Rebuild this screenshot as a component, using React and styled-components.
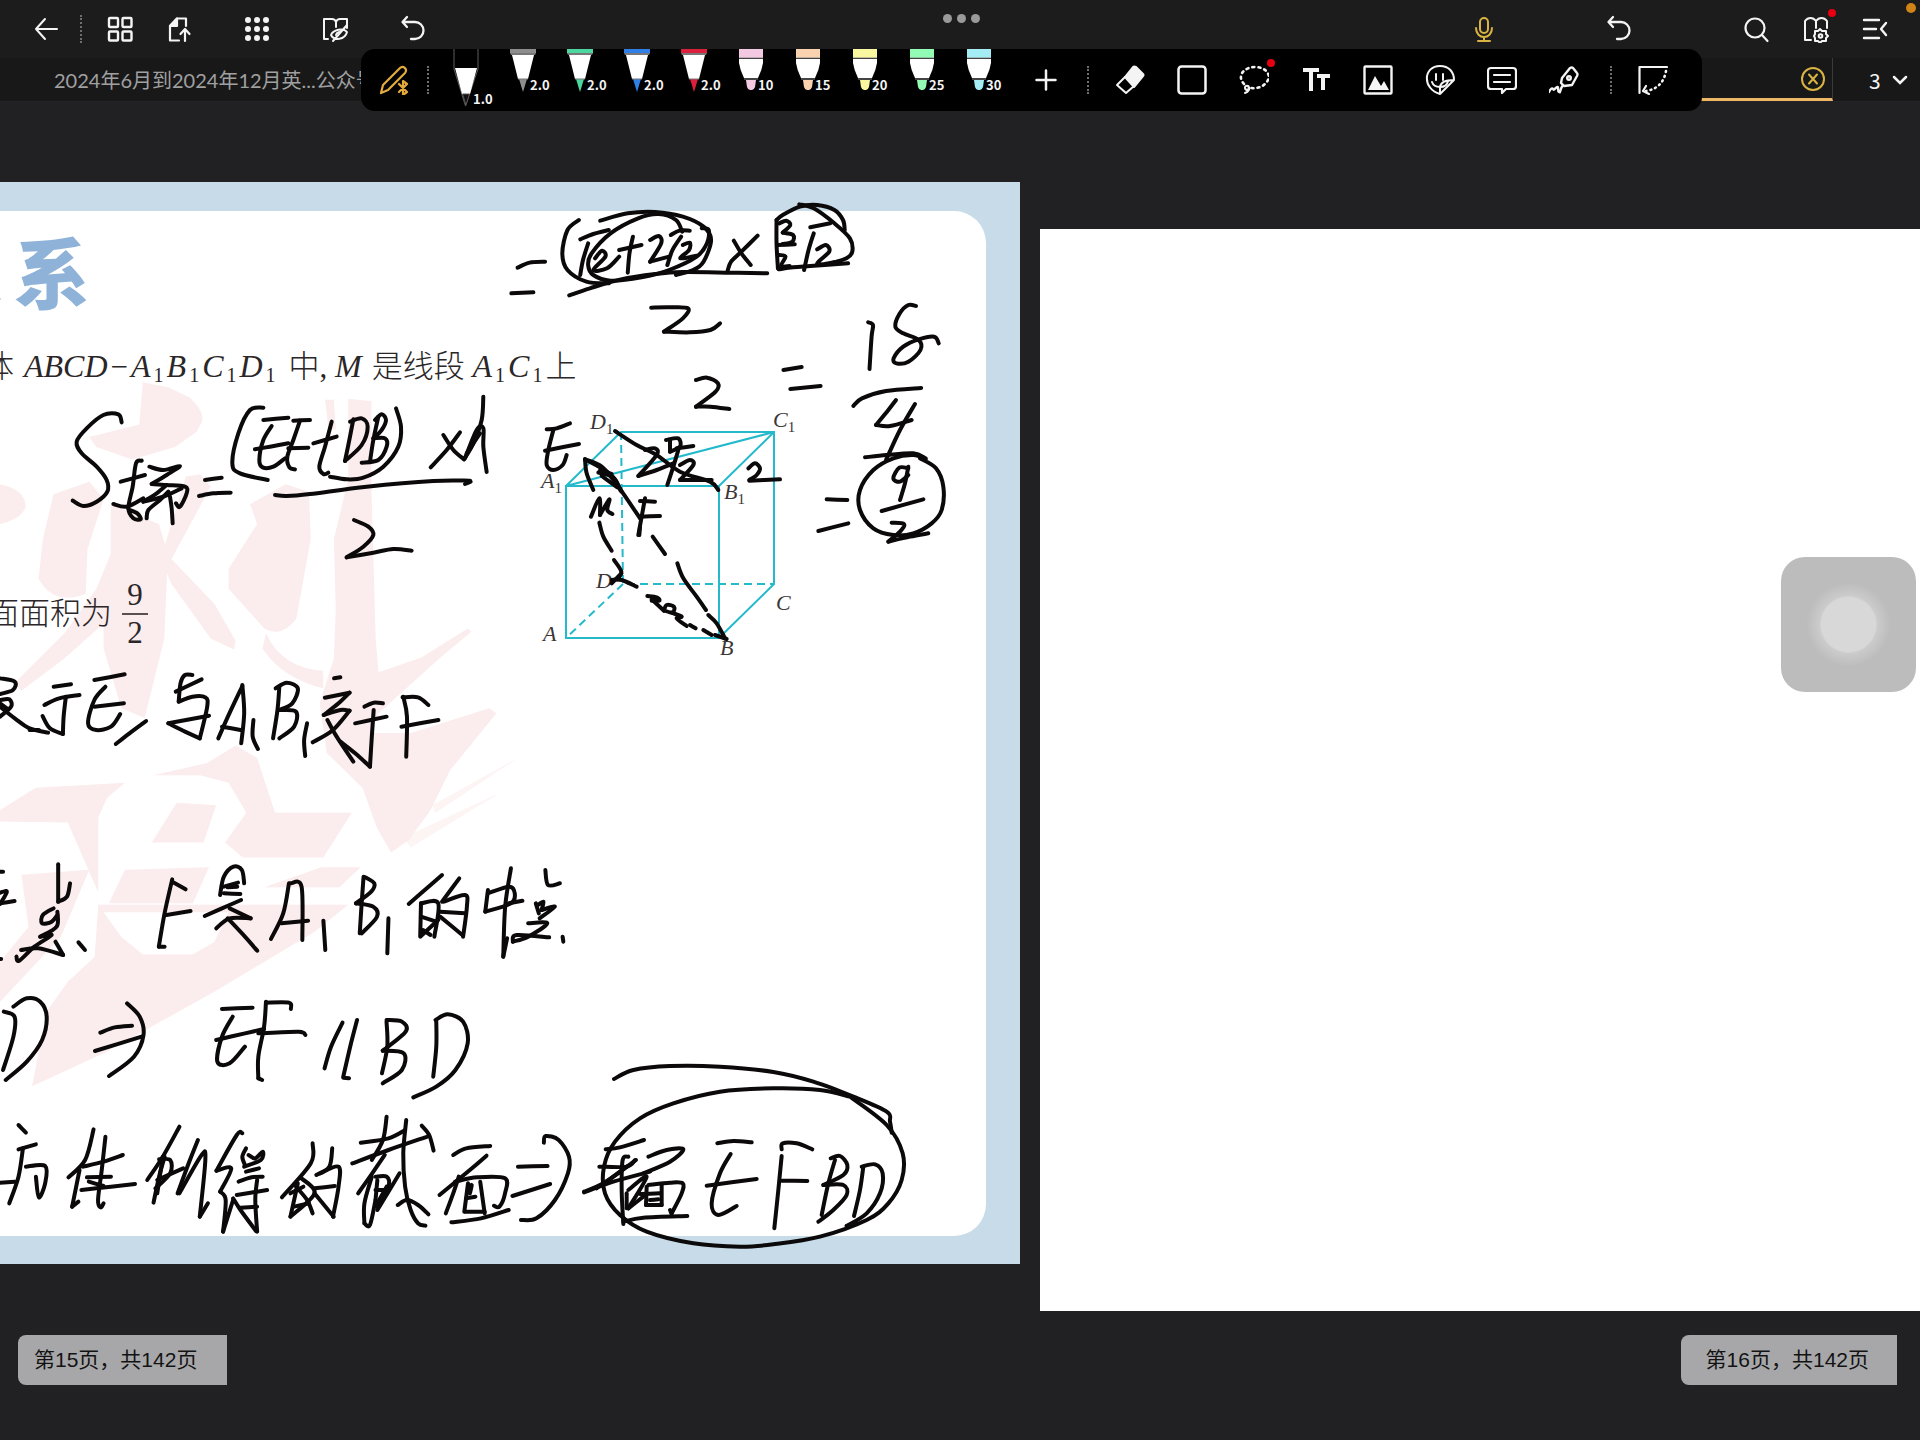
import styled, { createGlobalStyle } from 'styled-components'

const GlobalStyle = createGlobalStyle`
  * {
    box-sizing: border-box;
  }

  body {
    margin: 0;
    background: #212123;
    font-family: 'Liberation Sans', 'Noto Sans CJK SC', sans-serif;
  }
`

const Screen = styled.div`
  position: relative;
  min-height: 100vh;
  display: flex;
  flex-direction: column;
  overflow: hidden;
  background: #212123;
`

/// top bars

const NavBar = styled.header`
  display: grid;
  grid-template-columns: 1fr auto 1fr;
  align-items: center;
  height: 58px;
  padding: 0 30px 0 32px;
  background: #1c1c1c;
`

const NavGroup = styled.nav`
  display: flex;
  align-items: center;
  justify-content: ${props => props.$justify || 'flex-start'};
  gap: ${props => props.$gap || '50px'};
`

const IconButton = styled.button`
  position: relative;
  display: flex;
  align-items: center;
  justify-content: center;
  flex: none;
  width: ${props => props.$size || '28px'};
  height: ${props => props.$size || '28px'};
  padding: 0;
  border: 0;
  background: none;
  color: ${props => props.$color || '#f4f4f4'};
  cursor: pointer;
`

const Badge = styled.span`
  position: absolute;
  top: -6px;
  right: -6px;
  width: 8px;
  height: 8px;
  border-radius: 100%;
  background: #e60012;
`

const Divider = styled.span`
  flex: none;
  width: 0;
  height: ${props => props.$height || '28px'};
  margin-left: ${props => props.$before};
  margin-right: ${props => props.$after};
  border-left: 2px dotted #6e6e6e;
`

const MoreButton = styled.button`
  display: flex;
  gap: 5px;
  height: 20px;
  align-items: center;
  align-self: start;
  margin-top: 8px;
  padding: 0;
  border: 0;
  background: none;
`

const MoreDot = styled.span`
  width: 9px;
  height: 9px;
  border-radius: 100%;
  background: #9a9a9a;
`

const RecordingDot = styled.span`
  position: absolute;
  top: 3px;
  right: 4px;
  width: 10px;
  height: 10px;
  border-radius: 100%;
  background: #d08418;
`

const TabStrip = styled.div`
  display: flex;
  height: 44px;
  background: #181819;
  border-bottom: 1px solid #242426;
`

const Tab = styled.a`
  flex: 1;
  display: flex;
  align-items: center;
  padding-left: 54px;
  overflow: hidden;
  font-family: Lato, 'Noto Sans CJK SC', sans-serif;
  font-size: 20px;
  line-height: 24px;
  white-space: nowrap;
  text-decoration: none;
  color: #a0a0a0;
`

const ActiveTab = styled.div`
  flex: 1;
  display: flex;
  align-items: center;
  justify-content: flex-end;
  padding-right: 5px;
  border-bottom: 3px solid #eeb766;
  border-right: 1px solid #3a3a3a;
`

const TabCount = styled.button`
  display: flex;
  align-items: center;
  gap: 11px;
  width: 87px;
  padding: 0 0 0 36px;
  border: 0;
  background: none;
  color: #f4f4f4;
  font-family: 'Noto Sans CJK SC', sans-serif;
  font-size: 21px;
`

/// floating pen toolbar

const PenBar = styled.div`
  position: absolute;
  top: 49px;
  left: 361px;
  display: flex;
  align-items: center;
  height: 62px;
  padding: 0 34px 0 18px;
  border-radius: 14px;
  background: #000;
`

const PenRow = styled.div`
  display: flex;
  align-self: stretch;
  margin-right: 8px;
`

const PenSlot = styled.button`
  display: flex;
  align-items: flex-start;
  width: 57px;
  padding: 0;
  border: 0;
  background: none;
  color: #f4f4f4;
  cursor: pointer;
`

const PenSize = styled.span`
  margin-top: ${props => (props.$low ? '43px' : '29px')};
  margin-left: -6px;
  font-family: 'Noto Sans CJK SC', sans-serif;
  font-size: 13px;
  font-weight: 700;
  line-height: 14px;
`

const ToolRow = styled.div`
  display: flex;
  gap: 32px;
`

/// documents

const Workspace = styled.main`
  display: grid;
  grid-template-columns: 51fr 44fr;
  align-items: start;
  gap: 20px;
  padding-top: 80px;
`

const Paper = styled.article`
  position: relative;
  display: flex;
  min-height: 1082px;
  padding: 29px 34px 28px 0;
  background: #c8dbe8;
`

const BlankPaper = styled.article`
  min-height: 1082px;
  margin-top: 47px;
  background: #fff;
`

const Card = styled.div`
  flex: 1;
  padding-top: 20px;
  border-radius: 0 32px 32px 0;
  background: #fff;
  overflow: hidden;
`

const Layer = styled.svg`
  position: absolute;
  inset: 0;
  width: 100%;
  height: 100%;
  pointer-events: none;
`

const Printed = styled.section`
  position: relative;
`

const Title = styled.h1`
  display: flex;
  gap: 12px;
  margin: 0 0 37px -74px;
  color: #8fb2d8;
  font-family: 'Noto Sans CJK SC', sans-serif;
  font-size: 76px;
  font-weight: 900;
  line-height: 78px;
  white-space: nowrap;
`

const Line = styled.p`
  display: flex;
  align-items: center;
  gap: 10px;
  margin: 0 0 ${props => props.$after || '0'} ${props => props.$bleed};
  color: #2b2627;
  font-family: 'Liberation Serif', 'Noto Sans CJK SC', serif;
  font-size: 31px;
  font-weight: 300;
  line-height: 40px;
  white-space: nowrap;

  i {
    font-size: 32px;
  }

  sub {
    margin: 0 3px;
    font-size: 20px;
    line-height: 20px;
    vertical-align: -5px;
  }
`

const Dash = styled.span`
  margin: 0 3px;
`

const Fraction = styled.span`
  display: flex;
  flex-direction: column;
  align-items: center;
  width: 26px;
  line-height: 36px;

  span + span {
    align-self: stretch;
    text-align: center;
    border-top: 2px solid #5a5052;
  }
`

const PageLabels = styled.footer`
  display: flex;
  justify-content: space-between;
  margin-top: 24px;
  padding: 0 23px 55px 18px;
`

const PageLabel = styled.span`
  padding: 0 ${props => props.$end} 0 ${props => props.$start};
  border-radius: 8px 0 0 8px;
  background: #a7a7a9;
  color: #131313;
  font-size: 21px;
  line-height: 50px;
`

const TouchButton = styled.button`
  position: absolute;
  top: 557px;
  right: 4px;
  width: 135px;
  height: 135px;
  border: 0;
  border-radius: 24px;
  background: radial-gradient(circle, #d8d8d8 27px, #cbcbcb 29px, #bcbcbc 42px);
`

/// icons

const Icon = ({ children, size = 28, width = 2 }) => (
  <svg
    width={size}
    height={size}
    viewBox={`0 0 ${size} ${size}`}
    fill='none'
    stroke='currentColor'
    strokeWidth={width}
    strokeLinecap='round'
    strokeLinejoin='round'
    aria-hidden='true'
  >
    {children}
  </svg>
)

const BackIcon = () => <Icon><path d='M25 14H4M13 4L4 14l9 10' /></Icon>

const GridIcon = () => (
  <Icon width={2.4}>
    <rect x='3' y='3' width='9' height='9' rx='1' />
    <rect x='16.500' y='3' width='9' height='9' rx='1' />
    <rect x='3' y='16.500' width='9' height='9' rx='1' />
    <rect x='16.500' y='16.500' width='9' height='9' rx='1' />
  </Icon>
)

const ExportIcon = () => (
  <Icon width={2.2}>
    <path d='M13 25.500H4V11l7-7.500h9V11' />
    <path d='M4 11l7-7.500V11z' fill='currentColor' />
    <path d='M19 26V15M14.500 19l4.500-5 4.500 5' />
  </Icon>
)

const DotsIcon = () => (
  <Icon>
    {[5, 14, 23].map(y => [4, 13, 22].map(x => (
      <circle key={`${x}-${y}`} cx={x} cy={y} r='3' fill='currentColor' stroke='none' />
    )))}
  </Icon>
)

const BookSlashIcon = () => (
  <Icon>
    <path d='M6 24H2V4h8q3 0 4 3 1-3 4-3h7v9M14 7v5' />
    <path d='M9 20c2-5 12-8 16-3-2 8-13 9-16 3zM11 26L25 10' />
    <path d='M14 20q1-3 4-3' />
  </Icon>
)

const UndoIcon = () => <Icon width={2.3}><path d='M7 2L2.500 7 7 12M3 7h12a8.500 8.500 0 010 17h-4' /></Icon>

const MicIcon = () => (
  <Icon>
    <rect x='10' y='3' width='8' height='15' rx='4' />
    <path d='M6 13c0 12 16 12 16 0M14 22v4M8 26h12' />
  </Icon>
)

const SearchIcon = () => (
  <Icon width={2.2}>
    <circle cx='13' cy='13' r='9.500' />
    <path d='M20 20l5.500 6' />
  </Icon>
)

const BookGearIcon = () => (
  <Icon>
    <path d='M9 25H3V6c3-4 8-4 11 0v7M14 6c3-4 8-4 11 0v7' />
    <path d='M18 14l2 2h4l0 3 2 2-2 2v3h-4l-2 2-2-2h-3v-3l-1-2 1-2v-3h3z' />
    <circle cx='18.500' cy='21' r='1.800' />
  </Icon>
)

const MenuIcon = () => <Icon width={2.4}><path d='M2 5h15M2 14h12M2 23h15M24 8l-5 6 5 6' /></Icon>

const CloseIcon = () => (
  <Icon>
    <circle cx='14' cy='15' r='11' />
    <path d='M10 10.500l8 9M18 10.500l-8 9' />
  </Icon>
)

const PenBluetoothIcon = () => (
  <Icon size={30} width={2.2}>
    <path d='M2 28l2-8L21 3c3-3 8 1 5 5L9 25z' />
    <path d='M20 19l8 8-4 3V16l4 3-8 8' />
  </Icon>
)

const PlusIcon = () => <Icon width={2.5}><path d='M14 4.500v19M4.500 14h19' /></Icon>

const EraserIcon = () => (
  <Icon size={30}>
    <path d='M10 12L18 2q1-1 3 0l7 7q1 1 0 2l-9 11z' fill='currentColor' />
    <path d='M10 12l-8 8 9 8 8-7' />
  </Icon>
)

const ShapeIcon = () => <Icon size={30} width={2.5}><rect x='1.500' y='1.500' width='27' height='27' rx='3' /></Icon>

const LassoIcon = () => (
  <Icon size={30} width={2.6}>
    <path d='M5 19C-3 10 6 2 16 2s16 7 13 13-10 9-17 8' strokeDasharray='2 4' />
    <path d='M9 21c-4-1-4 4 0 4 1-2 1-4 0-4 3 3 0 6-3 7' strokeWidth='2' />
  </Icon>
)

const TextIcon = () => (
  <Icon size={30}>
    <path d='M2 5h16M10 4v22M16 11h13M22 11v14' strokeWidth='4' strokeLinecap='butt' />
  </Icon>
)

const ImageIcon = () => (
  <Icon size={30} width={2.4}>
    <rect x='1.500' y='1.500' width='27' height='27' rx='1' />
    <path d='M5 25l7-14 6 10 3-5 5 9z' fill='currentColor' stroke='none' />
  </Icon>
)

// round face with its lower right corner peeled off
const StickerIcon = () => (
  <Icon size={30}>
    <path d='M15 29C-3 24-2 1 15 1c9 0 14 6 14 14L15 29zM15 29V22q1-7 14-7' />
    <path d='M11 9v6M18 9v6M15 22C10 22 8 20 7 17M23 16q-1 6-8 6' />
  </Icon>
)

const CommentIcon = () => (
  <Icon size={30} width={2.2}>
    <path d='M4 3h22q3 0 3 3v15q0 3-3 3h-7l-4 4v-4H4q-3 0-3-3V6q0-3 3-3zM7 10h16M7 17h16' />
  </Icon>
)

const SignIcon = () => (
  <Icon size={30} width={2.4}>
    <path d='M13 13L21 3q2-1 3 0l4 5q1 1 0 3l-5 9-8 1-3-3z' />
    <circle cx='20' cy='13' r='1.800' />
    <path d='M14 20c-4 6-2 8-4 7s0-6-2-5-3 4-4 2-3 1-4 3' />
  </Icon>
)

const RulerIcon = () => (
  <Icon size={30} width={2.2}>
    <path d='M1.500 28V2H29' />
    <path d='M28 6c-2 11-8 18-20 20' strokeDasharray='1 4' strokeWidth='2.600' />
    <path d='M8 21l-3 5 6 3' />
  </Icon>
)

const ChevronIcon = () => (
  <svg width='16' height='10' fill='none' stroke='currentColor' strokeWidth='2.500' strokeLinecap='round' aria-hidden='true'>
    <path d='M2 2l6 6 6-6' />
  </svg>
)

const pens = [
  { kind: 'active', color: '#000', size: '1.0' },
  { kind: 'pen', color: '#8d8d8d', size: '2.0' },
  { kind: 'pen', color: '#4cd6a0', size: '2.0' },
  { kind: 'pen', color: '#2f7fe6', size: '2.0' },
  { kind: 'pen', color: '#dc1f3c', size: '2.0' },
  { kind: 'marker', color: '#f3c9e2', size: '10' },
  { kind: 'marker', color: '#fad2b0', size: '15' },
  { kind: 'marker', color: '#f9f7a0', size: '20' },
  { kind: 'marker', color: '#92fbb4', size: '25' },
  { kind: 'marker', color: '#a4edf5', size: '30' },
]

const PenDrawing = ({ kind, color }) => (
  <svg width='26' height='60' viewBox='0 0 26 60' aria-hidden='true'>
    {kind === 'active' && (
      <>
        <path d='M1 0v20l11.500 37L25 20V0' fill='#000' stroke='#5c5c5c' />
        <path d='M2 19h22l-7 26H9z' fill='#fff' />
        <path d='M9.500 45h7L13 56z' fill='#111' stroke='#555' />
      </>
    )}
    {kind === 'pen' && (
      <>
        <path d='M0 0h26v4H0z' fill={color} />
        <path d='M0 4h26l-1 2H1z' fill='#777' />
        <path d='M2 6h22l-6 24H8z' fill='#fff' />
        <path d='M9 30h8l-4 13z' fill={color} />
        <path d='M8 30h10' stroke='#777' />
      </>
    )}
    {kind === 'marker' && (
      <>
        <path d='M1 0h24v9H1z' fill={color} />
        <path d='M1 10h24v4q-1 7-5 15H6Q2 21 1 14z' fill='#fff' />
        <path d='M1 9h24M6 30h14' stroke='#888' />
        <path d='M8 31h10l-1 7q-1 3-3 3h-2q-2 0-3-3z' fill={color} />
      </>
    )}
  </svg>
)

const tools = [
  { label: '橡皮', icon: EraserIcon },
  { label: '形状', icon: ShapeIcon },
  { label: '套索', icon: LassoIcon, badge: true },
  { label: '文字', icon: TextIcon },
  { label: '图片', icon: ImageIcon },
  { label: '贴纸', icon: StickerIcon },
  { label: '批注', icon: CommentIcon },
  { label: '签名', icon: SignIcon },
]

/// ink

// Every sheet keeps its own origin and scale, strokes are separated by ";"
const inkSheets = [
  {
    place: 'translate(0 180) scale(0.33333)',
    strokes: `365,727 355,703 310,705 260,745 230,785 245,820 290,860 320,900 322,935 290,965 250,978 218,962;
      362,905 435,885;425,842 408,850 398,920 385,985 400,1015 422,1018 412,1000 385,988;340,972 380,980 430,955;
      448,860 490,870 540,858 500,885 455,912;455,912 500,915 555,920 560,940 540,980 528,970;500,915 470,940 430,965;
      430,965 490,950 545,925;510,950 515,985 518,1030;440,1015 445,990 480,960 505,935;
      615,900 665,893;597,948 640,940 692,938;
      790,683 750,690 715,760 697,850 720,880 803,900;
      790,720 865,713;815,738 790,780 778,840 788,862 820,860 855,835;765,808 810,800 865,790;
      880,722 930,720;900,722 880,780 862,830 868,862 885,868;865,805 925,803;
      995,725 975,800 958,860 970,882 985,878;940,790 1010,770;
      1060,718 1050,770 1035,843;1050,725 1085,715 1103,740 1085,795 1035,843;
      1135,710 1120,780 1110,845;1125,720 1145,703 1158,720 1145,750 1120,775;1120,775 1155,775 1160,800 1135,840 1085,848;
      1188,685 1203,740 1195,800 1150,860 1090,893 1040,898 990,890;
      1330,765 1360,810 1392,838;1380,757 1340,810 1292,862;
      1450,650 1445,720 1420,790 1392,838;1395,835 1430,750 1450,745 1450,800 1460,876;1400,820 1440,760;
      825,945 860,948 930,942 1100,920 1300,903 1410,902;1395,912 1412,905;
      1062,1020 1105,1040 1120,1065 1090,1100 1040,1132;1040,1132 1120,1118 1180,1107 1235,1112`,
  },
  {
    place: 'translate(490 190) scale(0.34439 0.33333)',
    strokes: `80,233 115,218 160,215;62,310 126,307;
      258,90 225,120 210,190 225,240 280,275 345,280;
      262,148 300,132 345,120;285,160 270,210 262,255;305,205 325,182 335,200 300,240 340,235 375,200;
      320,92 400,70 480,66 560,80 620,110 642,150 620,215 590,240 540,255;
      558,125 540,90 490,72 430,85 350,130 295,190 285,225 300,255 350,272 440,262 520,240 600,200 630,160 635,120 615,115;
      415,140 405,190 400,248;375,180 440,165;
      465,150 490,138 497,160 465,215;465,215 520,200;
      555,140 530,180 515,225;525,135 550,122 580,122;560,165 580,158 578,180 553,205 600,197;
      230,316 290,295 380,268 480,252 560,246 700,248 805,250;
      708,152 730,190 757,225;777,137 730,185 700,215 690,242;
      840,100 860,92 872,105 850,128;850,128 880,135 878,155 850,162;835,165 885,163;840,195 858,200 845,228 870,228;
      832,90 832,160 836,235;832,90 850,75 900,50 950,45 1000,60 1025,90 1030,120;
      898,43 940,55 1000,100 1045,145 1052,185 1035,205 990,220;838,238 880,232 930,228 1040,220;
      940,130 925,180 912,240;930,112 988,100;950,178 975,165 985,185 950,222 1010,215;
      468,353 520,352 575,355 560,385 505,425;505,425 580,427 640,420 668,400;
      598,570 630,563 662,580 655,605 598,650;598,650 640,650 695,657;
      852,540 905,531;872,597 960,588;
      1098,397 1112,405 1108,440 1102,537;
      1237,348 1215,345 1190,370 1177,410 1200,430 1245,450 1250,480 1215,515 1180,520 1172,505 1200,470 1245,448 1290,440 1303,460;
      1055,648 1080,625 1150,603 1252,594`,
  },
  {
    place: 'translate(530 400) scale(0.33333)',
    strokes: `50,88 80,85 120,70;70,90 55,150 50,195 70,210 98,195 110,165;45,152 147,132;
      255,93 320,135 380,165 450,215 540,245 565,270;
      345,150 375,145 380,165 325,228;325,228 380,210 430,190;
      408,120 445,115 450,140 420,155;420,120 420,155;440,145 490,138;445,150 430,200 412,255;
      450,195 480,180 490,195 450,240;450,240 545,240;
      165,178 215,200 265,260 330,355;165,178 240,222 275,275;205,218 250,232 272,272;215,228 262,262;210,212 245,222;
      165,178 170,220 190,270;
      183,350 208,295 210,345;210,345 238,298 232,330 247,342;
      345,295 335,350 325,405;330,303 375,305;330,350 390,348;330,380 328,405;
      208,368 220,410 245,452;252,480 274,515 262,538;274,520 245,550;245,540 275,540 320,560;
      368,410 405,462;442,490 460,535 500,590 528,630;535,645 560,670 585,715;
      352,588 380,592 388,602 365,602;365,598 402,632;402,632 410,615 432,620 428,638 405,632;425,638 455,650 440,655 470,678;480,675 497,685;520,690 545,705;555,705 590,717;
      655,205 675,190 690,205 680,225 658,240;658,242 750,238;
      1098,0 1075,30 1038,75;1038,75 1080,78 1145,60;1155,12 1110,90 1068,180;
      1005,172 1070,165 1150,160 1187,175;
      890,298 952,300;865,393 955,370;
      1170,175 1218,205 1240,260 1235,330 1205,370 1150,400 1090,405 1030,385 990,330 990,270 1030,210 1090,175 1150,165 1187,178;
      1135,205 1108,203 1090,235 1110,245 1135,225;1135,200 1125,250 1110,300;1055,333 1180,298;
      1085,368 1122,372 1110,395 1075,425;1075,425 1140,410 1195,400`,
  },
  {
    place: 'translate(0 560) scale(0.36997 0.33333)',
    strokes: `0,355 40,365 35,390 0,402;0,420 25,418 30,440 0,470;0,430 22,448;0,440 40,475 80,505 130,518;80,510 105,510;
      145,380 192,373;120,435 160,415 215,405;178,410 172,470 170,522;170,522 135,505 115,468;
      255,360 337,343;285,380 255,420 238,490 260,510 300,500 325,462;255,440 335,430;
      395,483 350,520 313,552;
      520,345 500,345 488,370 483,425;475,395 545,358;483,425 520,410 555,412 560,440 540,535;565,467 455,490;455,490 500,515 540,535;
      655,378 620,460 590,535;655,375 660,460 652,550;600,500 650,510;
      685,480 683,530 697,567;
      755,380 750,450 738,535;745,385 775,368 805,385 790,430 755,450;755,450 800,455 795,500 755,535;
      830,490 822,540 825,588;
      903,355 920,352;878,413 945,398;945,398 915,430 875,465;875,465 920,450 945,452;945,452 900,510 845,547;885,480 910,530 955,605;
      985,440 1010,428 1035,430;960,490 1045,470;1010,450 1005,530 1000,620;1000,620 960,580 920,545;
      1090,410 1100,470 1098,590;1088,412 1130,412 1158,435;1085,500 1185,480`,
  },
  {
    place: 'translate(0 840) scale(0.38271 0.33333)',
    strokes: `0,95 8,95;0,158 18,155 0,192;0,190 38,183;0,357 3,357;
      152,73 152,130 152,185;152,185 175,170 183,130;
      140,205 112,225 110,250 135,245 150,225;150,215 148,260 105,290;105,290 135,285 90,320 50,362 43,350;55,330 100,325 165,345;145,305 165,345;205,307 222,330;
      450,118 430,220 415,320;415,320 430,320;450,125 485,148;435,225 498,213;
      575,165 585,110 610,80 632,90 638,130;585,140 622,128;595,142 620,140;585,160 628,162;
      535,228 580,205 630,180;600,205 655,235;655,235 600,235 565,265;595,235 640,290 672,332;
      755,130 740,220 708,297;760,130 788,140 790,300;735,250 805,242;
      845,242 850,330;
      950,110 945,190 940,280;955,112 978,130 970,155 930,190;930,190 975,200 985,230 945,280;
      1015,235 1012,340;
      1155,105 1100,160 1068,192;1100,190 1098,290;1100,190 1145,190 1135,290;1100,230 1140,245;1100,288 1145,240;1105,270 1125,285;
      1200,115 1155,185;1160,185 1215,165 1220,200 1210,290;1150,215 1215,220;1150,230 1208,285;
      1335,85 1320,200 1315,350;1315,350 1325,295;1275,150 1268,215;1275,160 1330,140 1345,160 1335,190 1268,215;1330,190 1365,182;
      1425,90 1432,135 1463,130;1400,190 1408,220;1405,195 1420,185 1415,210;1415,210 1450,200 1410,235;
      1380,250 1430,250 1380,290 1340,305;1340,305 1350,285 1435,292;1470,290 1472,305;
      10,515 38,530 35,590 8,690;35,500 70,475 105,485 122,530 110,600 70,665 15,720;
      262,578 300,562 345,557;248,633 370,590;332,490 365,530 375,585 350,650 285,708;
      580,507 660,503;608,530 580,590 568,665 600,670 640,620;565,600 640,580 690,567;
      695,485 690,560 675,650 675,715;675,715 685,720;695,488 755,488 760,507;675,580 780,575 798,585;
      895,548 865,620 848,685;933,540 915,620 897,710;897,713 912,715;
      1010,545 1012,620 998,700;1010,540 1050,545 1060,575 1000,632;1000,632 1055,640 1050,690 1000,730;
      1140,545 1140,620 1132,710;1138,540 1170,523 1210,545 1222,610 1190,690 1140,740 1080,772`,
  },
  {
    place: 'translate(0 1060) scale(0.36997 0.33333)',
    strokes: `50,195 70,218;50,268 97,253;62,265 50,350 25,430;70,320 122,318 122,370 105,412 97,350;0,368 40,365;
      253,208 230,300 185,352;215,330 195,440;195,440 212,425;225,320 280,305 332,285;285,230 275,330 265,420 272,442 280,430;235,352 300,350;220,390 300,380 365,372;240,365 280,378;
      485,200 440,290 398,360;445,290 430,350 415,428;430,298 460,300 460,340 420,385;425,360 495,325;440,290 425,400;
      535,240 510,310 480,400;485,400 545,285 555,300 540,470;540,470 562,430;
      655,220 640,225 585,332;585,332 625,325 595,395;595,395 610,420 603,515;603,515 630,420;
      665,265 655,290 662,315;672,285 690,295 710,275 705,300 660,320;700,325 665,335;645,365 680,352 710,350;640,405 722,390;695,360 690,420 695,515;630,415 650,450 692,513;650,443 695,440;
      845,250 840,310 762,412;805,370 785,470;785,470 850,400 815,355;800,380 830,420 845,460;795,440 835,430;785,400 820,380;
      898,265 890,320 855,345;865,340 915,320 915,380 900,470;850,385 905,378;850,400 902,470;
      1045,170 1035,240 1005,300;975,248 1050,235 1095,210;952,310 1050,270 1155,230;1098,180 1090,280 1095,380 1110,450 1130,490 1150,497;1140,197 1160,225 1172,272;
      1040,285 1000,350 968,400;1005,350 985,430 985,490;985,490 1000,495 1015,420;1015,350 1045,350 1050,380 1020,440;1020,360 1015,420;1015,390 1045,390;1020,450 1080,340;1020,430 1045,380;
      1075,435 1100,420 1130,435 1158,463;
      1225,285 1260,265 1325,258;1315,287 1270,330 1188,405;1240,350 1225,400 1205,460;1230,365 1290,352 1365,355 1365,400 1350,440 1335,437;
      1265,370 1255,455;1265,385 1275,375 1270,400;1298,365 1310,460;1260,415 1285,410;1258,455 1310,455;1220,487 1300,475 1375,450;
      1400,320 1480,318;1385,408 1487,372;1470,248 1475,228 1510,240 1538,290 1535,340 1500,420 1450,475 1408,480`,
  },
  {
    place: 'translate(560 1050) scale(0.33333)',
    strokes: `162,87 220,60 330,48 480,50 640,66 760,95 880,140 980,185 990,215 995,248;
      870,140 980,225 1028,310 1025,390 985,460 920,510 780,560 640,583 540,590 400,580 260,545 180,495 135,430 132,350 165,275 240,205 340,160 480,125 640,115 780,120 870,140;
      137,298 180,292 252,270;118,350 200,350 225,330;72,427 160,395 270,365;72,425 130,400 200,350;205,320 188,330 185,420 190,522;
      265,320 320,300 370,298 330,335 250,370;228,330 160,380 110,415;205,420 260,380 205,475;200,430 200,475;205,475 250,440;
      260,410 258,465;258,465 305,465;305,465 305,405;240,432 300,430;270,450 295,448;
      265,405 330,398 368,400 365,430 335,490;330,480 335,492;190,515 250,503 382,498;
      472,280 520,273 575,277;512,312 480,370 455,460 475,495 530,468;440,407 590,387;
      665,318 655,420 643,535;665,298 668,280 710,280 757,298;665,392 742,393;
      825,330 805,400 785,495;812,325 840,318 862,345 850,375 790,405;790,405 850,405 860,435 820,480 775,515;
      910,350 900,420 882,498;905,350 945,343 968,370 960,430 920,490 860,528;860,528 890,520`,
  },
]

const smooth = stroke => {
  const p = stroke.trim().split(/\s+/).map(pair => pair.split(',').map(Number))
  let d = `M${p[0]}`
  for (let i = 0; i < p.length - 1; i++) {
    const a = p[i - 1] || p[i]
    const b = p[i]
    const c = p[i + 1]
    const e = p[i + 2] || c
    d += `C${b[0] + (c[0] - a[0]) / 6} ${b[1] + (c[1] - a[1]) / 6} ${c[0] - (e[0] - b[0]) / 6} ${c[1] - (e[1] - b[1]) / 6} ${c[0]} ${c[1]}`
  }
  return d
}

const Ink = () => (
  <Layer viewBox='0 182 1020 1082' fill='none' stroke='#0b0909' strokeWidth='4' strokeLinecap='round' strokeLinejoin='round' aria-hidden='true'>
    {inkSheets.map(sheet => (
      <g key={sheet.place} transform={sheet.place}>
        {sheet.strokes.split(';').map((stroke, i) => (
          <path key={i} d={smooth(stroke)} vectorEffect='non-scaling-stroke' />
        ))}
      </g>
    ))}
  </Layer>
)

const Watermark = () => (
  <Layer viewBox='0 182 1020 1082' aria-hidden='true'>
    <g transform='translate(0 340) scale(0.35714 0.4975)' fill='#fbeced'>
      <path d='M390 170L400 85 470 95 530 115Q575 145 565 165L550 185 490 215 370 240 270 215 250 195z' />
      <path d='M910 120h25l5 60h-20zM975 118l65 5v180l12 300 8 65 120-30 130-58 10 6-90 54-170 110-20 40h110l220-50 20 10-130 115-55 80-60 60-50 25-40-50-40-80-100-70-20-100 40-90 5-100-5-140 40-120z' />
      <path d='M0 290Q70 300 72 335Q60 360 0 370z' />
      <path d='M150 310L250 285 290 320 245 420 240 510Q150 535 108 480L120 400z' />
      <path d='M310 330L445 370 470 430 460 600 405 760 340 740 290 620V570L180 640 60 705 40 690 180 590 270 500 310 430z' />
      <path d='M520 275L560 270 590 295 480 440 600 530 660 605 655 622 590 600 480 490 450 440z' />
      <path d='M700 330L800 290 865 305 870 400 830 560Q790 600 740 580L640 500V460L720 370z' />
      <path d='M745 590Q790 660 905 665V700Q790 680 735 620z' />
      <path d='M430 875L580 850 660 815 720 840 770 950H985L905 1040H680L630 1010 690 950 640 890 560 875z' />
      <path d='M495 930L605 935 570 1010H425z' />
      <path d='M0 945L100 900 350 890 300 920 275 960V1110L190 970 0 968z' />
      <path d='M350 1065L585 1060 540 1132H305z' />
      <path d='M60 1075L250 1065 170 1200 0 1330V1250L80 1180z' />
      <path d='M275 1135L975 1135 880 1190 600 1310 450 1370 300 1430 90 1500 130 1350 190 1290 265 1240z' />
      <path d='M290 1150H640L600 1210 540 1235H400L340 1200z' fill='#fff' />
      <path d='M740 1100L900 1060 1010 1060 950 1100z' />
      <path d='M1210 935L1450 840 1220 950zM1130 1000L1400 910 1150 1020z' opacity='0.6' />
    </g>
  </Layer>
)

const cubeLabels = [
  { x: 590, y: 429, name: 'D', index: '1' },
  { x: 773, y: 427, name: 'C', index: '1' },
  { x: 541, y: 488, name: 'A', index: '1' },
  { x: 724, y: 499, name: 'B', index: '1' },
  { x: 596, y: 588, name: 'D' },
  { x: 776, y: 610, name: 'C' },
  { x: 543, y: 641, name: 'A' },
  { x: 720, y: 655, name: 'B' },
]

const CubeLabel = styled.text`
  fill: #3b3637;
  font-family: 'Liberation Serif', serif;
  font-size: 22px;
  font-style: italic;
`

const Cube = () => (
  <Layer viewBox='0 182 1020 1082'>
    <g fill='none' stroke='#25b9cc' strokeWidth='2'>
      <path d='M566 486H719V638H566zM566 486L621 432H774V584L719 638M719 486L774 432M566 486L774 432' />
      <path d='M621 432L623 584H774M623 584L566 638' strokeDasharray='8 5' />
    </g>
    {cubeLabels.map(({ x, y, name, index }) => (
      <CubeLabel key={`${name}${index}`} x={x} y={y}>
        {name}
        {index && <tspan dy='5' fontSize='15' fontStyle='normal'>{index}</tspan>}
      </CubeLabel>
    ))}
  </Layer>
)

export default function App() {
  return (
    <Screen>
      <GlobalStyle />
      <NavBar>
        <NavGroup>
          <NavGroup $gap='0'>
            <IconButton aria-label='返回'><BackIcon /></IconButton>
            <Divider $before='20px' $after='24px' />
            <NavGroup $gap='32px'>
              <IconButton aria-label='缩略图'><GridIcon /></IconButton>
              <IconButton aria-label='导出'><ExportIcon /></IconButton>
            </NavGroup>
          </NavGroup>
          <IconButton aria-label='应用'><DotsIcon /></IconButton>
          <IconButton aria-label='阅读模式'><BookSlashIcon /></IconButton>
          <IconButton aria-label='撤销'><UndoIcon /></IconButton>
        </NavGroup>
        <MoreButton aria-label='更多'>
          <MoreDot />
          <MoreDot />
          <MoreDot />
        </MoreButton>
        <NavGroup $justify='flex-end' $gap='108px'>
          <IconButton aria-label='录音' $color='#d9b443'><MicIcon /></IconButton>
          <IconButton aria-label='恢复'><UndoIcon /></IconButton>
          <NavGroup $gap='32px'>
            <IconButton aria-label='搜索'><SearchIcon /></IconButton>
            <IconButton aria-label='文档设置'>
              <BookGearIcon />
              <Badge />
            </IconButton>
            <IconButton aria-label='菜单'><MenuIcon /></IconButton>
          </NavGroup>
        </NavGroup>
      </NavBar>
      <RecordingDot />

      <TabStrip>
        <Tab href='#'>2024年6月到2024年12月英...公众号</Tab>
        <ActiveTab>
          <IconButton aria-label='关闭' $color='#d9b443'><CloseIcon /></IconButton>
        </ActiveTab>
        <TabCount>
          3
          <ChevronIcon />
        </TabCount>
      </TabStrip>

      <PenBar>
        <IconButton $size='30px' $color='#e3ab3c' aria-label='蓝牙笔'><PenBluetoothIcon /></IconButton>
        <Divider $before='18px' $after='24px' />
        <PenRow>
          {pens.map((pen, i) => (
            <PenSlot key={i}>
              <PenDrawing kind={pen.kind} color={pen.color} />
              <PenSize $low={pen.kind === 'active'}>{pen.size}</PenSize>
            </PenSlot>
          ))}
        </PenRow>
        <IconButton $size='30px' aria-label='添加'><PlusIcon /></IconButton>
        <Divider $before='26px' $after='26px' />
        <ToolRow>
          {tools.map(({ label, icon: ToolIcon, badge }) => (
            <IconButton key={label} $size='30px' aria-label={label}>
              <ToolIcon />
              {badge && <Badge />}
            </IconButton>
          ))}
        </ToolRow>
        <Divider $before='31px' $after='26px' />
        <IconButton $size='30px' aria-label='收起'><RulerIcon /></IconButton>
      </PenBar>

      <Workspace>
        <Paper>
          <Card>
            <Watermark />
            <Printed>
              <Title>
                <span>关</span>
                <span>系</span>
              </Title>
              <Line $bleed='-17px' $after='190px'>
                <span>体</span>
                <span><i>ABCD</i><Dash>−</Dash><i>A</i><sub>1</sub><i>B</i><sub>1</sub><i>C</i><sub>1</sub><i>D</i><sub>1</sub></span>
                <span>中, <i>M</i></span>
                <span>是线段 <i>A</i><sub>1</sub><i>C</i><sub>1</sub>上</span>
              </Line>
              <Line $bleed='-12px'>
                <span>面面积为</span>
                <Fraction>
                  <span>9</span>
                  <span>2</span>
                </Fraction>
              </Line>
            </Printed>
            <Cube />
            <Ink />
          </Card>
        </Paper>
        <BlankPaper />
      </Workspace>

      <PageLabels>
        <PageLabel $start='16px' $end='30px'>第15页，共142页</PageLabel>
        <PageLabel $start='25px' $end='28px'>第16页，共142页</PageLabel>
      </PageLabels>

      <TouchButton aria-label='辅助触控' />
    </Screen>
  )
}
